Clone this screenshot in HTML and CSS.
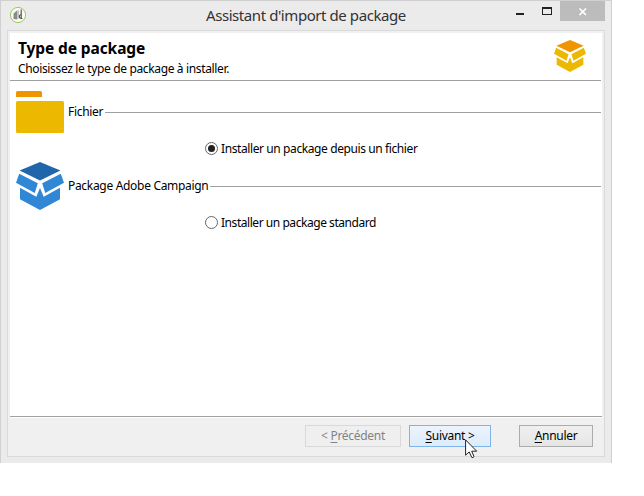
FILE: index.html
```html
<!DOCTYPE html>
<html lang="fr">
<head>
<meta charset="utf-8">
<title>Assistant d'import de package</title>
<link rel="stylesheet" href="styles.css">
</head>
<body>
<svg width="0" height="0" class="defs" aria-hidden="true">
  <symbol id="box" viewBox="0 0 48 48">
    <path class="box-top" d="M24 0L44.4 8.5 24 18.5 3.6 8.5Z"/>
    <path class="box-side" d="M3.2 11.8L21.8 21.2 18.8 31 0 20.8ZM44.8 11.8L26.2 21.2 29.2 31 48 20.8ZM4 25.8L20.3 34.8 24 26 27.7 34.8 44 25.8V37.3L24 48 4 37.3Z"/>
  </symbol>
</svg>
<div class="window">
  <header class="titlebar">
    <svg class="app-icon" viewBox="0 0 18 18">
      <circle cx="9" cy="9" r="7.6" fill="#fafaf8" stroke="#9cc85e" stroke-width="1"/>
      <path d="M4.5 7.5L8 4.5V13.5L4.5 13Z" fill="#8b8b86"/>
      <path d="M8 4.5L10 4V12L8 13.5Z" fill="#c4c4c0"/>
      <path d="M12.2 3.5V12.5M12 8.5C9.8 9 9.8 12 12 12.5H13.5" fill="none" stroke="#555" stroke-width="1.2"/>
    </svg>
    <h1 class="title"><span>Assistant d'import de package</span></h1>
    <svg class="controls" viewBox="0 0 100 21">
      <path d="M11 13H19V15H11Z" fill="#222"/>
      <path d="M37 7H47V15H37ZM38 9V14H46V9Z" fill="#222" fill-rule="evenodd"/>
      <path d="M55 1H100V21H55Z" fill="#bcbcbc"/>
      <path d="M74.5 8.5L81 15M81 8.5L74.5 15" stroke="#fff" stroke-width="1.7"/>
    </svg>
  </header>
  <main class="frame">
    <div class="page">
      <div class="intro">
        <div>
          <h2 class="heading">Type de package</h2>
          <p class="sub">Choisissez le type de package à installer.</p>
        </div>
        <svg class="box gold"><use href="#box"/></svg>
      </div>
      <section class="group">
        <div class="legend">
          <svg class="icon" viewBox="0 0 48 48">
            <path d="M0 9V4.5Q0 3 1.5 3H24.5Q26 3 26 4.5V9Z" fill="#ee9500"/>
            <rect y="13" width="48" height="32" rx="1.5" fill="#ecb800"/>
          </svg>
          <span class="name file">Fichier</span><i class="rule"></i>
        </div>
        <label class="option"><i class="radio on"></i><span class="opt1">Installer un package depuis un fichier</span></label>
      </section>
      <section class="group">
        <div class="legend">
          <svg class="icon blue"><use href="#box"/></svg>
          <span class="name pack">Package Adobe Campaign</span><i class="rule"></i>
        </div>
        <label class="option"><i class="radio"></i><span class="opt2">Installer un package standard</span></label>
      </section>
    </div>
    <footer class="actions">
      <button class="btn prev" disabled><span>&lt; <u>P</u>récédent</span></button>
      <button class="btn next"><span><u>S</u>uivant &gt;</span></button>
      <button class="btn cancel"><span><u>A</u>nnuler</span></button>
    </footer>
  </main>
  <svg class="cursor" viewBox="0 0 13 20">
    <path d="M.6.9V16.2L4.2 12.9 6.8 18.4Q8 19 9 17.6L6.7 12.2H11.7Z" fill="#fff" stroke="#222" stroke-width="1"/>
  </svg>
</div>
</body>
</html>
```
FILE: styles.css
```css
* { box-sizing: border-box; }
body {
  margin: 0;
  background: #fff;
  color: #000;
  font: 12px/16px "Noto Sans", "Open Sans", sans-serif;
}
h1, h2, p { margin: 0; }
.defs { position: absolute; }
.window {
  position: relative;
  width: 612px;
  height: 463px;
  padding-left: 6px;
  background: #ebebeb;
  border: 1px solid #d0d0d0;
  border-bottom: 0;
}
.titlebar {
  display: flex;
  height: 29px;
}
.app-icon { width: 18px; height: 18px; margin: 5px 0 0 2px; }
.title {
  flex: 1;
  padding: 4px 0 0 179px;
  font-size: 15px;
  line-height: 20px;
  font-weight: 400;
  color: #333;
  white-space: nowrap;
  letter-spacing: -.43px;
}
.controls { width: 100px; height: 21px; margin: -1px 6px 0 0; }
.frame {
  width: 598px;
  height: 427px;
  padding: 2px 2px 0;
  background: #f0f0f0;
  border: 1px solid #dadada;
}
.page {
  height: 385px;
  padding-right: 1px;
  background: #fff;
  box-shadow: inset 0 -1px #fff, inset 0 -2px #a0a0a0;
}
.intro {
  display: flex;
  justify-content: space-between;
  height: 48px;
  padding: 5px 15px 0 8px;
  border-bottom: 1px solid #a0a0a0;
}
.heading { font-size: 15.5px; line-height: 20px; font-weight: 700; letter-spacing: -.1px; }
.sub { margin-top: 3px; letter-spacing: -.35px; white-space: nowrap; }
.box { width: 32px; height: 32px; margin-top: 2px; }
.gold { --top: #ee9500; --side: #ecb800; }
.blue { --top: #2165aa; --side: #3087d5; }
.box-top { fill: var(--top); }
.box-side { fill: var(--side); }
.group { height: 74px; padding-top: 7px; }
.legend { display: flex; align-items: center; padding-left: 6px; }
.icon { flex: none; width: 48px; height: 48px; margin-right: 4px; }
.name { white-space: nowrap; letter-spacing: -.31px; }
.rule { flex: 1; height: 1px; margin-left: 2px; background: #a0a0a0; }
.option { display: flex; align-items: flex-start; height: 16px; margin: 5px 0 0 195px; white-space: nowrap; letter-spacing: -.4px; }
.opt2 { letter-spacing: -.45px; }
.radio {
  display: grid;
  place-items: center;
  width: 13px;
  height: 13px;
  margin: 1px 3px 0 0;
  border: 1px solid #666;
  border-radius: 50%;
}
.on::after { content: ""; width: 7px; height: 7px; border-radius: 50%; background: #222; }
.actions { display: flex; padding: 7px 9px 0 295px; }
.btn {
  height: 22px;
  padding: 0;
  border: 1px solid #acacac;
  background: linear-gradient(#f0f0f0, #e5e5e5);
  color: #000;
  font: inherit;
  letter-spacing: -.3px;
}
.btn u { text-underline-offset: 2px; }
.prev { width: 96px; margin-right: 8px; border-color: #d9d9d9; background: #efefef; color: #838383; }
.next { width: 82px; margin-right: 28px; border-color: #7eb4ea; background: linear-gradient(#ecf4fc, #dcecfc); }
.cancel { width: 74px; }
.cursor { position: absolute; left: 464px; top: 438px; width: 13px; height: 20px; }
```
